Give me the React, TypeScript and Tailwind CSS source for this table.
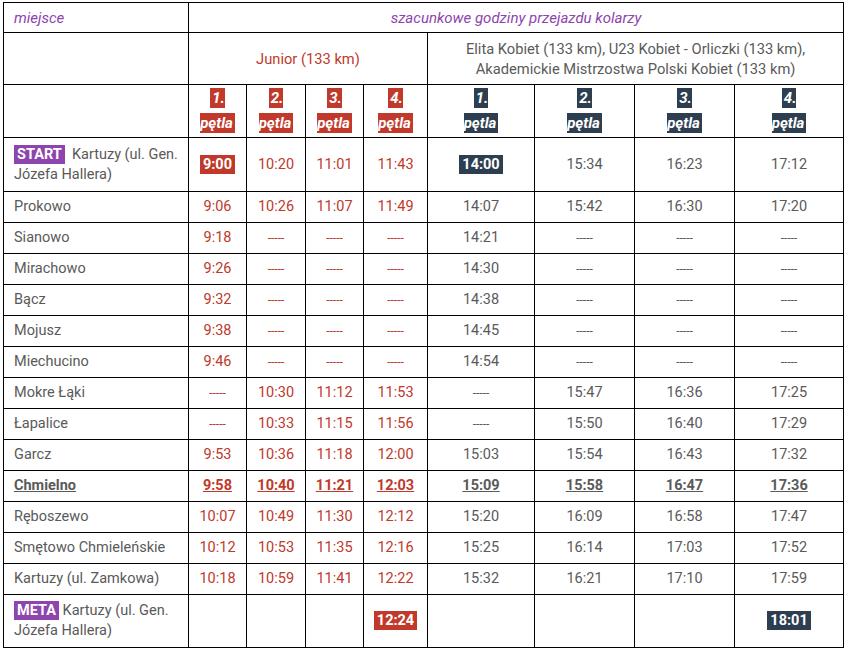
import type { ReactNode } from 'react';

const RED = 'text-[#c0392b]';
const GRAY = 'text-[#5a5a5a]';

type Stop = { name: string; junior: string[]; elite: string[]; bold?: boolean };

const stops: Stop[] = [
  { name: 'Prokowo', junior: ['9:06', '10:26', '11:07', '11:49'], elite: ['14:07', '15:42', '16:30', '17:20'] },
  { name: 'Sianowo', junior: ['9:18', '-----', '-----', '-----'], elite: ['14:21', '-----', '-----', '-----'] },
  { name: 'Mirachowo', junior: ['9:26', '-----', '-----', '-----'], elite: ['14:30', '-----', '-----', '-----'] },
  { name: 'Bącz', junior: ['9:32', '-----', '-----', '-----'], elite: ['14:38', '-----', '-----', '-----'] },
  { name: 'Mojusz', junior: ['9:38', '-----', '-----', '-----'], elite: ['14:45', '-----', '-----', '-----'] },
  { name: 'Miechucino', junior: ['9:46', '-----', '-----', '-----'], elite: ['14:54', '-----', '-----', '-----'] },
  { name: 'Mokre Łąki', junior: ['-----', '10:30', '11:12', '11:53'], elite: ['-----', '15:47', '16:36', '17:25'] },
  { name: 'Łapalice', junior: ['-----', '10:33', '11:15', '11:56'], elite: ['-----', '15:50', '16:40', '17:29'] },
  { name: 'Garcz', junior: ['9:53', '10:36', '11:18', '12:00'], elite: ['15:03', '15:54', '16:43', '17:32'] },
  { name: 'Chmielno', junior: ['9:58', '10:40', '11:21', '12:03'], elite: ['15:09', '15:58', '16:47', '17:36'], bold: true },
  { name: 'Ręboszewo', junior: ['10:07', '10:49', '11:30', '12:12'], elite: ['15:20', '16:09', '16:58', '17:47'] },
  { name: 'Smętowo Chmieleńskie', junior: ['10:12', '10:53', '11:35', '12:16'], elite: ['15:25', '16:14', '17:03', '17:52'] },
  { name: 'Kartuzy (ul. Zamkowa)', junior: ['10:18', '10:59', '11:41', '12:22'], elite: ['15:32', '16:21', '17:10', '17:59'] },
];

function Cell({ children, className = '' }: { children?: ReactNode; className?: string }) {
  return <td className={`border border-black px-[10px] py-0 align-middle ${className}`}>{children}</td>;
}

function Lap({ n, dark }: { n: number; dark?: boolean }) {
  const bg = dark ? 'bg-[#2c3e50]' : 'bg-[#c0392b]';
  return (
    <span className={`${bg} px-[2px] py-[1px] text-[15px] font-bold italic text-white`}>
      {n}.
      <br />
      pętla
    </span>
  );
}

function TimeBadge({ t, dark }: { t: string; dark?: boolean }) {
  const bg = dark ? 'bg-[#2c3e50]' : 'bg-[#c0392b]';
  return <span className={`${bg} px-[3px] py-[1px] font-bold text-white`}>{t}</span>;
}

function Tag({ label }: { label: string }) {
  return <span className="bg-[#8e44ad] px-[3px] py-[1px] font-bold text-white">{label}</span>;
}

function Time({ t, red, bold }: { t: string; red?: boolean; bold?: boolean }) {
  const dash = t.startsWith('-');
  return (
    <span className={`${red ? RED : GRAY} ${bold ? 'font-bold underline' : ''} ${dash ? 'text-[12px]' : ''}`}>
      {t}
    </span>
  );
}

export default function App() {
  return (
    <div className="bg-white pl-[3px] pt-[2px] font-['Roboto','Liberation_Sans',sans-serif] text-[14.5px] leading-[20px]">
      <table className="w-[841px] table-fixed border-collapse">
        <colgroup>
          <col className="w-[185px]" />
          <col className="w-[58px]" />
          <col className="w-[59px]" />
          <col className="w-[58px]" />
          <col className="w-[64px]" />
          <col className="w-[107px]" />
          <col className="w-[100px]" />
          <col className="w-[100px]" />
          <col className="w-[109px]" />
        </colgroup>
        <tbody>
          <tr className="h-[30px] text-[15px]">
            <Cell className="italic text-[#8e44ad]">miejsce</Cell>
            <td colSpan={8} className="border border-black text-center italic text-[#8e44ad]">
              szacunkowe godziny przejazdu kolarzy
            </td>
          </tr>
          <tr className="h-[52px] text-[14.7px]">
            <Cell />
            <td colSpan={4} className={`border border-black text-center ${RED}`}>
              Junior (133 km)
            </td>
            <td colSpan={4} className={`border border-black px-[10px] text-center ${GRAY}`}>
              Elita Kobiet (133 km), U23 Kobiet - Orliczki (133 km), Akademickie Mistrzostwa Polski Kobiet (133 km)
            </td>
          </tr>
          <tr className="h-[53px] leading-[24px]">
            <Cell />
            {[1, 2, 3, 4].map((n) => (
              <td key={n} className="border border-black text-center">
                <Lap n={n} />
              </td>
            ))}
            {[1, 2, 3, 4].map((n) => (
              <td key={n} className="border border-black text-center">
                <Lap n={n} dark />
              </td>
            ))}
          </tr>
          <tr className="h-[54px]">
            <Cell className={GRAY}>
              <Tag label="START" /> {'\u00a0'}Kartuzy (ul. Gen. Józefa Hallera)
            </Cell>
            <td className="border border-black text-center">
              <TimeBadge t="9:00" />
            </td>
            {['10:20', '11:01', '11:43'].map((t) => (
              <td key={t} className="border border-black text-center">
                <Time t={t} red />
              </td>
            ))}
            <td className="border border-black text-center">
              <TimeBadge t="14:00" dark />
            </td>
            {['15:34', '16:23', '17:12'].map((t) => (
              <td key={t} className="border border-black text-center">
                <Time t={t} />
              </td>
            ))}
          </tr>
          {stops.map((s) => (
            <tr key={s.name} className="h-[31px]">
              <Cell className={`${GRAY} ${s.bold ? 'font-bold underline' : ''}`}>{s.name}</Cell>
              {s.junior.map((t, i) => (
                <td key={'j' + i} className="border border-black text-center">
                  <Time t={t} red bold={s.bold} />
                </td>
              ))}
              {s.elite.map((t, i) => (
                <td key={'e' + i} className="border border-black text-center">
                  <Time t={t} bold={s.bold} />
                </td>
              ))}
            </tr>
          ))}
          <tr className="h-[53px]">
            <Cell className={GRAY}>
              <Tag label="META" /> Kartuzy (ul. Gen. Józefa Hallera)
            </Cell>
            <td className="border border-black" />
            <td className="border border-black" />
            <td className="border border-black" />
            <td className="border border-black text-center">
              <TimeBadge t="12:24" />
            </td>
            <td className="border border-black" />
            <td className="border border-black" />
            <td className="border border-black" />
            <td className="border border-black text-center">
              <TimeBadge t="18:01" dark />
            </td>
          </tr>
        </tbody>
      </table>
    </div>
  );
}
